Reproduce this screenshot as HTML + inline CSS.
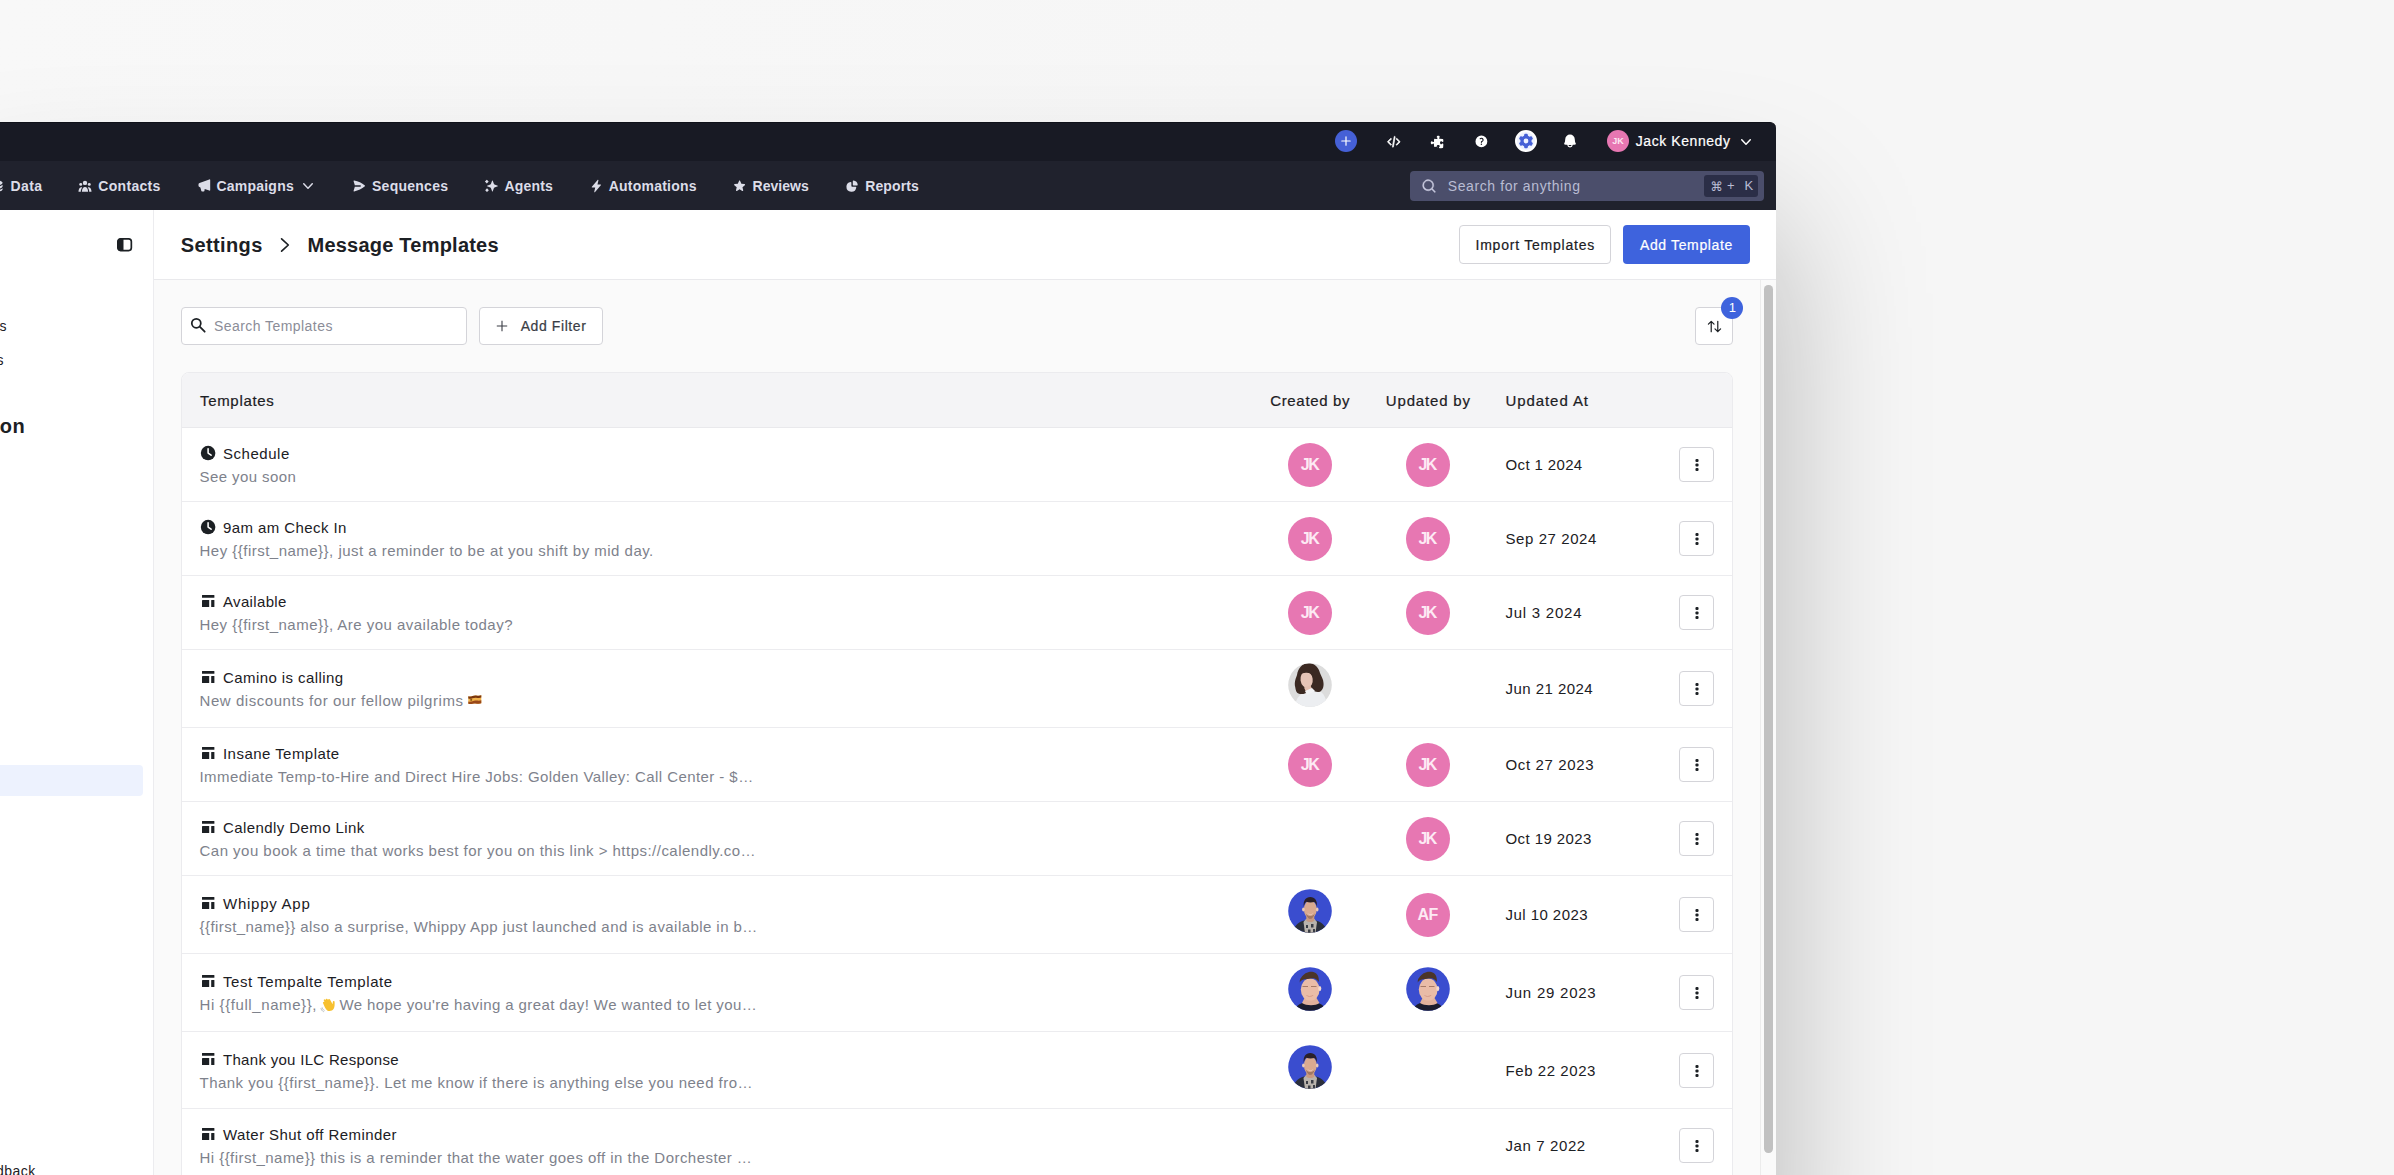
<!DOCTYPE html>
<html lang="en"><head><meta charset="utf-8"><title>Message Templates</title>
<style>
*{box-sizing:border-box;margin:0;padding:0}
html,body{width:2394px;height:1175px;overflow:hidden}
body{position:relative;font-family:"Liberation Sans",sans-serif;
 background:
  linear-gradient(100deg,#f8f8f8 0%,#f6f6f6 50%,#f6f6f6 100%);}
.t{position:absolute;white-space:pre;display:block}
.abs{position:absolute}
svg{position:absolute;display:block;overflow:visible}
.win{position:absolute;left:-40px;top:121.5px;width:1816px;height:1100px;border-top-right-radius:6px;background:#fff;
 box-shadow:0 100px 150px rgba(0,0,0,.27)}
.topbar{position:absolute;left:0;top:121.5px;width:1776px;height:39.5px;background:#181a24;border-top:1px solid #0f1119;border-top-right-radius:6px}
.navbar{position:absolute;left:0;top:160.5px;width:1776px;height:49px;background:#20222d}
.sidebar{position:absolute;left:0;top:209.5px;width:154px;height:970px;background:#fff;border-right:1px solid #ececef}
.header{position:absolute;left:154px;top:209.5px;width:1622px;height:70.5px;background:#fff;border-bottom:1px solid #e9e9ec}
.content{position:absolute;left:154px;top:280px;width:1622px;height:900px;background:#fafafa}
.sline{position:absolute;left:1760px;top:280px;width:1px;height:900px;background:#ececec}
.sthumb{position:absolute;left:1764.3px;top:284.5px;width:8.4px;height:868px;border-radius:4.2px;background:#c1c1c1}
.btn{position:absolute;border:1px solid #d4d4d9;border-radius:4px;background:#fff}
.table{position:absolute;left:181px;top:372px;width:1552px;height:830px;border:1px solid #ebebee;border-radius:8px;background:#fff;overflow:hidden}
.thead{position:absolute;left:0;top:0;width:100%;height:55px;background:#f4f4f6;border-bottom:1px solid #e9e9ec}
.rline{position:absolute;left:182px;width:1550px;height:1px;background:#ececef}
.av{position:absolute;width:44px;height:44px;border-radius:50%;background:#e777b2;overflow:hidden}

</style></head>
<body>
<div class="win"></div>
<div class="topbar"></div>
<div class="navbar"></div>
<div class="sidebar"></div>
<div class="header"></div>
<div class="content"></div>
<div class="sline"></div><div class="sthumb"></div>
<div class="abs" style="left:1335px;top:130.3px;width:22px;height:22px;border-radius:50%;background:#4560d6"></div>
<svg viewBox="0 0 20 20" width="16" height="16" style="left:1338.00px;top:133.30px;fill:#fff;"><path d="M10.75 4.75a.75.75 0 00-1.5 0v4.5h-4.5a.75.75 0 000 1.5h4.5v4.5a.75.75 0 001.5 0v-4.5h4.5a.75.75 0 000-1.5h-4.5v-4.5z"/></svg>
<svg viewBox="0 0 20 20" width="13.6" height="13.6" style="left:1386.50px;top:135.10px;fill:#fff;stroke:#fff;stroke-width:1;stroke-linejoin:round;"><path fill-rule="evenodd" d="M6.28 5.22a.75.75 0 010 1.06L2.56 10l3.72 3.72a.75.75 0 01-1.06 1.06L.97 10.53a.75.75 0 010-1.06l4.25-4.25a.75.75 0 011.06 0zm7.44 0a.75.75 0 011.06 0l4.25 4.25a.75.75 0 010 1.06l-4.25 4.25a.75.75 0 01-1.06-1.06L17.44 10l-3.72-3.72a.75.75 0 010-1.06zM11.377 2.011a.75.75 0 01.612.867l-2.5 14.5a.75.75 0 01-1.478-.255l2.5-14.5a.75.75 0 01.866-.612z" clip-rule="evenodd"/></svg>
<svg viewBox="0 0 20 20" width="15" height="15" style="left:1430.30px;top:134.60px;fill:#fff;"><path d="M12 4.467c0-.405.262-.75.559-1.027.276-.257.441-.584.441-.94 0-.828-.895-1.5-2-1.5s-2 .672-2 1.5c0 .362.171.694.456.953.29.265.544.6.544.994a.968.968 0 01-1.033.968 39.31 39.31 0 01-2.632-.291.75.75 0 00-.85.67 41.84 41.84 0 00-.198 2.777c-.013.48-.426.858-.906.858-.401 0-.739-.265-.999-.571C3.116 8.55 2.78 8.375 2.5 8.375c-.828 0-1.5.895-1.5 2s.672 2 1.5 2c.28 0 .616-.175.882-.483.26-.306.598-.571.999-.571.48 0 .893.378.906.858.03 1.076.11 2.14.24 3.19a.75.75 0 00.85.645c.92-.114 1.85-.196 2.79-.245A.968.968 0 0010 16.8c0-.394-.254-.73-.544-.994C9.171 15.546 9 15.215 9 14.853c0-.828.895-1.5 2-1.5s2 .672 2 1.5c0 .355-.165.683-.441.94-.297.277-.559.622-.559 1.027a.997.997 0 001.048.997c1.292-.086 2.57-.22 3.832-.402a.75.75 0 00.64-.682c.137-1.457.218-2.93.24-4.417a.968.968 0 00-.968-.983c-.394 0-.73.254-.994.544-.26.285-.591.456-.953.456-.828 0-1.5-.895-1.5-2s.672-2 1.5-2c.356 0 .683.165.94.441.277.297.622.559 1.027.559a.997.997 0 00.997-1.048 41.4 41.4 0 00-.176-2.245.75.75 0 00-.678-.67 39.3 39.3 0 00-3.907-.337A.997.997 0 0112 4.467z"/></svg>
<svg viewBox="0 0 20 20" width="14.8" height="14.8" style="left:1474.30px;top:133.90px;fill:#fff;"><path fill-rule="evenodd" d="M18 10a8 8 0 11-16 0 8 8 0 0116 0zM8.94 6.94a.75.75 0 11-1.061-1.061 3 3 0 112.871 5.026v.345a.75.75 0 01-1.5 0v-.5c0-.72.57-1.172 1.081-1.287A1.5 1.5 0 108.94 6.94zM10 15a1 1 0 100-2 1 1 0 000 2z" clip-rule="evenodd"/></svg>
<div class="abs" style="left:1515px;top:130.3px;width:22px;height:22px;border-radius:50%;background:#eef2ff;border:2px solid #fff"></div>
<svg viewBox="0 0 20 20" width="16" height="16" style="left:1518.00px;top:133.30px;fill:#4560d6;"><path fill-rule="evenodd" d="M7.84 1.804A1 1 0 018.82 1h2.36a1 1 0 01.98.804l.331 1.652a6.993 6.993 0 011.929 1.115l1.598-.54a1 1 0 011.186.447l1.18 2.044a1 1 0 01-.205 1.251l-1.267 1.113a7.047 7.047 0 010 2.228l1.267 1.113a1 1 0 01.206 1.25l-1.18 2.045a1 1 0 01-1.187.447l-1.598-.54a6.993 6.993 0 01-1.929 1.115l-.33 1.652a1 1 0 01-.98.804H8.82a1 1 0 01-.98-.804l-.331-1.652a6.993 6.993 0 01-1.929-1.115l-1.598.54a1 1 0 01-1.186-.447l-1.18-2.044a1 1 0 01.205-1.251l1.267-1.114a7.05 7.05 0 010-2.227L1.821 7.773a1 1 0 01-.206-1.25l1.18-2.045a1 1 0 011.187-.447l1.598.54A6.993 6.993 0 017.51 3.456l.33-1.652zM10 13a3 3 0 100-6 3 3 0 000 6z" clip-rule="evenodd"/></svg>
<svg viewBox="0 0 20 20" width="16" height="16" style="left:1561.80px;top:133.30px;fill:#fff;"><path fill-rule="evenodd" d="M10 2a6 6 0 00-6 6c0 1.887-.454 3.665-1.257 5.234a.75.75 0 00.515 1.076 32.91 32.91 0 003.256.508 3.5 3.5 0 006.972 0 32.903 32.903 0 003.256-.508.75.75 0 00.515-1.076A11.448 11.448 0 0116 8a6 6 0 00-6-6zM8.05 14.943a33.54 33.54 0 003.9 0 2 2 0 01-3.9 0z" clip-rule="evenodd"/></svg>
<div class="abs" style="left:1606.8px;top:130.10000000000002px;width:22.4px;height:22.4px;border-radius:50%;background:#e777b2"></div>
<span class="t" style="left:1612.13px;top:135.78px;font-size:9px;font-weight:700;color:#fde8f3;letter-spacing:0.219px;line-height:11px;">JK</span>
<span class="t" style="left:1635.70px;top:133.05px;font-size:14px;font-weight:400;-webkit-text-stroke:.2px;color:#fff;letter-spacing:0.577px;line-height:17px;">Jack Kennedy</span>
<svg viewBox="0 0 20 20" width="20" height="20" style="left:1735.60px;top:132.00px;fill:#fff;"><path fill-rule="evenodd" d="M5.23 7.21a.75.75 0 011.06.02L10 11.168l3.71-3.938a.75.75 0 111.08 1.04l-4.25 4.5a.75.75 0 01-1.08 0l-4.25-4.5a.75.75 0 01.02-1.06z" clip-rule="evenodd"/></svg>
<svg viewBox="0 0 20 20" width="14" height="14" style="left:-9.80px;top:178.80px;fill:#dcdde8;"><path d="M2 5.5C2 3.6 5.6 2 10 2s8 1.600 8 3.500S14.400 9 10 9 2 7.400 2 5.500zM2 8.200v2.300C2 12.400 5.600 14 10 14s8-1.600 8-3.500V8.200C16.500 9.900 13.400 10.800 10 10.800S3.500 9.900 2 8.200zM2 13.200v1.300C2 16.400 5.600 18 10 18s8-1.600 8-3.500v-1.300c-1.500 1.700-4.600 2.600-8 2.600s-6.500-.900-8-2.600z"/></svg>
<span class="t" style="left:10.40px;top:177.55px;font-size:14px;font-weight:700;color:#dcdde8;letter-spacing:0.447px;line-height:17px;">Data</span>
<svg viewBox="0 0 20 20" width="14" height="14" style="left:78.00px;top:178.80px;fill:#dcdde8;"><circle cx="10" cy="5.600" r="3.100"/><circle cx="3.900" cy="7.700" r="2.100"/><circle cx="16.100" cy="7.700" r="2.100"/><path d="M5.600 18.200c0-3.800 1.900-6.700 4.400-6.700s4.400 2.900 4.400 6.700z"/><path d="M.7 18.200c0-3.300 1.300-6 3.600-6.500.6-.1 1.200 0 1.700.3-1.300 1.500-2 3.700-2 6.200zM19.300 18.200c0-3.300-1.300-6-3.600-6.500-.6-.1-1.200 0-1.700.3 1.300 1.500 2 3.700 2 6.200z"/></svg>
<span class="t" style="left:98.20px;top:177.55px;font-size:14px;font-weight:700;color:#dcdde8;letter-spacing:0.328px;line-height:17px;">Contacts</span>
<svg viewBox="0 0 14 14" width="14" height="14" style="left:197.00px;top:178.80px;fill:#dcdde8;"><path d="M1.500 5.200Q1.500 4.200 2.500 3.900L12.300 .4Q13.200 .1 13.200 1.100V10.900Q13.200 11.900 12.300 11.600L7.700 9.950 7.450 11.800Q7.350 12.450 6.700 12.450H5.050Q4.400 12.450 4.250 11.800L3.400 8.450 2.500 8.100Q1.500 7.800 1.500 6.800Z"/></svg>
<span class="t" style="left:216.50px;top:177.55px;font-size:14px;font-weight:700;color:#dcdde8;letter-spacing:0.216px;line-height:17px;">Campaigns</span>
<svg viewBox="0 0 20 20" width="14" height="14" style="left:351.80px;top:178.80px;fill:#dcdde8;"><path d="M3.105 2.289a.75.75 0 00-.826.95l1.900 6.100a2 2 0 010 1.300l-1.900 6.100a.75.75 0 00.826.95 28.896 28.896 0 0015.293-7.154.75.75 0 000-1.115A28.897 28.897 0 003.105 2.289z"/><path d="M4.600 10h7.200" fill="none" stroke="#20222d" stroke-width="1.800" stroke-linecap="round"/></svg>
<span class="t" style="left:372.00px;top:177.55px;font-size:14px;font-weight:700;color:#dcdde8;letter-spacing:0.258px;line-height:17px;">Sequences</span>
<svg viewBox="0 0 20 20" width="14" height="14" style="left:484.30px;top:178.80px;fill:#dcdde8;"><path d="M12.500 2.400l1.700 4.600a1.400 1.400 0 00.830.830l4.600 1.700a.5.5 0 010 .94l-4.600 1.700a1.400 1.400 0 00-.830.830l-1.700 4.600a.5.5 0 01-.94 0l-1.700-4.600a1.400 1.400 0 00-.830-.830l-4.600-1.700a.5.5 0 010-.94l4.600-1.700a1.400 1.400 0 00.830-.830l1.700-4.600a.5.5 0 01.94 0z"/><path d="M4 .9L6.700 3.700 4 6.500 1.300 3.700zM4.300 13.200L6.900 15.900 4.300 18.600 1.700 15.900z"/></svg>
<span class="t" style="left:504.50px;top:177.55px;font-size:14px;font-weight:700;color:#dcdde8;letter-spacing:0.169px;line-height:17px;">Agents</span>
<svg viewBox="0 0 20 20" width="14" height="14" style="left:588.50px;top:178.80px;fill:#dcdde8;"><path d="M12.300 1.300c.5-.6 1.400-.1 1.200.6L12.100 7.800h4.200c.7 0 1 .8.600 1.300L8.700 18.700c-.5.6-1.400.1-1.200-.6l1.400-5.900H4.700c-.7 0-1-.8-.6-1.300z"/></svg>
<span class="t" style="left:608.70px;top:177.55px;font-size:14px;font-weight:700;color:#dcdde8;letter-spacing:0.224px;line-height:17px;">Automations</span>
<svg viewBox="0 0 20 20" width="13.2" height="13.2" style="left:733.40px;top:179.20px;fill:#dcdde8;"><path fill-rule="evenodd" d="M10.868 2.884c-.321-.772-1.415-.772-1.736 0l-1.83 4.401-4.753.381c-.833.067-1.171 1.107-.536 1.651l3.62 3.102-1.106 4.637c-.194.813.691 1.456 1.405 1.02L10 15.591l4.069 2.485c.713.436 1.598-.207 1.404-1.02l-1.106-4.637 3.62-3.102c.635-.544.297-1.584-.536-1.65l-4.752-.382-1.831-4.401z" clip-rule="evenodd"/></svg>
<span class="t" style="left:752.60px;top:177.55px;font-size:14px;font-weight:700;color:#dcdde8;letter-spacing:0.009px;line-height:17px;">Reviews</span>
<svg viewBox="0 0 20 20" width="14.2" height="14.2" style="left:845.40px;top:178.70px;fill:#dcdde8;"><path d="M12 9a1 1 0 01-1-1V3c0-.552.45-1.007.997-.93a7.004 7.004 0 015.933 5.933c.078.547-.378.997-.93.997h-5z"/><path d="M8.003 4.07C8.55 3.994 9 4.449 9 5v5a1 1 0 001 1h5c.552 0 1.008.45.93.997A7.001 7.001 0 012 11a7.002 7.002 0 016.003-6.93z"/></svg>
<span class="t" style="left:865.20px;top:177.55px;font-size:14px;font-weight:700;color:#dcdde8;letter-spacing:0.132px;line-height:17px;">Reports</span>
<svg viewBox="0 0 20 20" width="20" height="20" style="left:298.40px;top:176.30px;fill:#dcdde8;"><path fill-rule="evenodd" d="M5.23 7.21a.75.75 0 011.06.02L10 11.168l3.71-3.938a.75.75 0 111.08 1.04l-4.25 4.5a.75.75 0 01-1.08 0l-4.25-4.5a.75.75 0 01.02-1.06z" clip-rule="evenodd"/></svg>
<div class="abs" style="left:1410px;top:171px;width:354px;height:30px;border-radius:4px;background:#4b4e6b"></div>
<svg viewBox="0 0 20 20" width="16" height="16" style="left:1421.00px;top:178.30px;fill:#c9cbe0;stroke:#c9cbe0;stroke-width:.5;"><path fill-rule="evenodd" d="M9 3.5a5.5 5.5 0 100 11 5.5 5.5 0 000-11zM2 9a7 7 0 1112.452 4.391l3.328 3.329a.75.75 0 11-1.06 1.06l-3.329-3.328A7 7 0 012 9z" clip-rule="evenodd"/></svg>
<span class="t" style="left:1447.80px;top:178.05px;font-size:14px;font-weight:400;color:#b9bcd3;letter-spacing:0.600px;line-height:17px;">Search for anything</span>
<div class="abs" style="left:1704px;top:174.5px;width:54px;height:22px;border-radius:3px;background:#2b2e47"></div>
<span class="t" style="left:1710.60px;top:178.77px;font-size:12.5px;font-weight:400;color:#b9bcd3;letter-spacing:0.000px;line-height:15px;font-family:'DejaVu Sans',sans-serif;">⌘</span>
<span class="t" style="left:1727.00px;top:178.10px;font-size:13px;font-weight:400;color:#b9bcd3;letter-spacing:0.000px;line-height:16px;">+</span>
<span class="t" style="left:1744.60px;top:178.10px;font-size:13px;font-weight:400;color:#b9bcd3;letter-spacing:0.000px;line-height:16px;">K</span>
<svg viewBox="0 0 15.2 13.4" width="15.2" height="13.4" style="left:117px;top:238.3px"><rect x=".85" y=".85" width="13.500" height="11.700" rx="2.700" fill="none" stroke="#1c2024" stroke-width="1.700"/><path d="M3.500 .5h3v12.400h-3a3 3 0 01-3-3V3.500a3 3 0 013-3z" fill="#1c2024"/></svg>
<div class="abs" style="left:0;top:765px;width:143px;height:31px;border-radius:0 4px 4px 0;background:#edf2fe"></div>
<span class="t" style="left:-55.36px;top:317.65px;font-size:14px;font-weight:400;color:#1c2024;letter-spacing:0.386px;line-height:17px;">Channels</span>
<span class="t" style="left:-35.14px;top:351.65px;font-size:14px;font-weight:400;color:#1c2024;letter-spacing:0.520px;line-height:17px;">Users</span>
<span class="t" style="left:-89.51px;top:414.27px;font-size:20px;font-weight:700;color:#1c2024;letter-spacing:0.335px;line-height:24px;">Automation</span>
<span class="t" style="left:-29.56px;top:1162.65px;font-size:14px;font-weight:400;color:#1c2024;letter-spacing:0.482px;line-height:17px;">Feedback</span>
<span class="t" style="left:180.70px;top:233.07px;font-size:20px;font-weight:700;color:#1c2024;letter-spacing:0.385px;line-height:24px;">Settings</span>
<svg viewBox="0 0 10 16" width="10" height="16" style="left:280px;top:237px;fill:none;stroke:#1c2024;stroke-width:1.700;stroke-linecap:round;stroke-linejoin:round"><path d="M1.600 1.800L8.300 8 1.600 14.200"/></svg>
<span class="t" style="left:307.50px;top:233.07px;font-size:20px;font-weight:700;color:#1c2024;letter-spacing:0.225px;line-height:24px;">Message Templates</span>
<div class="btn" style="left:1459px;top:225.2px;width:152px;height:38.5px"></div>
<span class="t" style="left:1475.50px;top:236.65px;font-size:14px;font-weight:400;-webkit-text-stroke:.2px;color:#1c2024;letter-spacing:0.772px;line-height:17px;">Import Templates</span>
<div class="abs" style="left:1622.5px;top:225.2px;width:127px;height:38.5px;border-radius:4px;background:#3e63dd"></div>
<span class="t" style="left:1639.90px;top:236.65px;font-size:14px;font-weight:400;-webkit-text-stroke:.2px;color:#fff;letter-spacing:0.649px;line-height:17px;">Add Template</span>
<div class="btn" style="left:181px;top:307px;width:286px;height:38px"></div>
<svg viewBox="0 0 16 16" width="16" height="16" style="left:190px;top:317.3px;fill:none;stroke:#1c2024;stroke-width:1.750;stroke-linecap:round"><circle cx="6.300" cy="6.300" r="4.500"/><path d="M9.700 9.700L14.700 14.700"/></svg>
<span class="t" style="left:214.00px;top:318.45px;font-size:14px;font-weight:400;color:#8b8d98;letter-spacing:0.439px;line-height:17px;">Search Templates</span>
<div class="btn" style="left:479px;top:307px;width:123.5px;height:38px"></div>
<svg viewBox="0 0 12 12" width="12" height="12" style="left:496px;top:320.4px;stroke:#3a3d45;stroke-width:1.100;fill:none"><path d="M6 .800v10.400M.800 6h10.400"/></svg>
<span class="t" style="left:520.70px;top:318.45px;font-size:14px;font-weight:400;-webkit-text-stroke:.2px;color:#3a3d45;letter-spacing:0.586px;line-height:17px;">Add Filter</span>
<div class="btn" style="left:1695px;top:307px;width:38px;height:38px"></div>
<svg viewBox="0 0 16 16" width="15" height="15" style="left:1706.5px;top:318.6px;stroke:#1c2024;stroke-width:1.300;fill:none;stroke-linecap:round;stroke-linejoin:round"><path d="M4.500 13.500V2.500M1.500 5.500l3-3 3 3M11.500 2.500v11M8.500 10.500l3 3 3-3"/></svg>
<div class="abs" style="left:1721px;top:297px;width:22px;height:22px;border-radius:50%;background:#3e63dd"></div>
<span class="t" style="left:1728.65px;top:300.10px;font-size:13px;font-weight:400;color:#fff;letter-spacing:0.000px;line-height:16px;">1</span>
<div class="table"><div class="thead"></div></div>
<span class="t" style="left:200.00px;top:391.50px;font-size:15px;font-weight:400;-webkit-text-stroke:.2px;color:#1c2024;letter-spacing:0.678px;line-height:18px;">Templates</span>
<span class="t" style="left:1270.20px;top:391.50px;font-size:15px;font-weight:400;-webkit-text-stroke:.2px;color:#1c2024;letter-spacing:0.669px;line-height:18px;">Created by</span>
<span class="t" style="left:1385.80px;top:391.50px;font-size:15px;font-weight:400;-webkit-text-stroke:.2px;color:#1c2024;letter-spacing:0.830px;line-height:18px;">Updated by</span>
<span class="t" style="left:1505.50px;top:391.50px;font-size:15px;font-weight:400;-webkit-text-stroke:.2px;color:#1c2024;letter-spacing:0.918px;line-height:18px;">Updated At</span>
<div class="rline" style="top:501px"></div>
<svg viewBox="0 0 20 20" width="18.2" height="18.2" style="left:198.80px;top:444.30px;fill:#1c2024;"><circle cx="10" cy="10" r="8"/><path d="M10 5.200V10l3.300 2.300" fill="none" stroke="#fff" stroke-width="1.700" stroke-linecap="round" stroke-linejoin="round"/></svg>
<span class="t" style="left:223.00px;top:444.50px;font-size:15px;font-weight:400;color:#1c2024;letter-spacing:0.527px;line-height:18px;">Schedule</span>
<span class="t" style="left:199.50px;top:467.70px;font-size:15px;font-weight:400;color:#7e828c;letter-spacing:0.416px;line-height:18px;">See you soon</span>
<div class="av" style="left:1288px;top:443px"></div><span class="t" style="left:1300.70px;top:455.06px;font-size:16px;font-weight:700;color:#fdeaf4;letter-spacing:-1.453px;line-height:19px;">JK</span>
<div class="av" style="left:1405.7px;top:443px"></div><span class="t" style="left:1418.40px;top:455.06px;font-size:16px;font-weight:700;color:#fdeaf4;letter-spacing:-1.453px;line-height:19px;">JK</span>
<span class="t" style="left:1505.50px;top:456.20px;font-size:15px;font-weight:400;color:#1c2024;letter-spacing:0.368px;line-height:18px;">Oct 1 2024</span>
<div class="btn" style="left:1679px;top:447.1px;width:35px;height:35px"></div>
<svg viewBox="0 0 4 14" width="4" height="14" style="left:1694.5px;top:457.8px;fill:#1c2024"><rect x=".45" y=".9" width="3.100" height="3.100" rx="1.100"/><rect x=".45" y="5.450" width="3.100" height="3.100" rx="1.100"/><rect x=".45" y="10" width="3.100" height="3.100" rx="1.100"/></svg>
<div class="rline" style="top:575px"></div>
<svg viewBox="0 0 20 20" width="18.2" height="18.2" style="left:198.80px;top:518.30px;fill:#1c2024;"><circle cx="10" cy="10" r="8"/><path d="M10 5.200V10l3.300 2.300" fill="none" stroke="#fff" stroke-width="1.700" stroke-linecap="round" stroke-linejoin="round"/></svg>
<span class="t" style="left:223.00px;top:518.50px;font-size:15px;font-weight:400;color:#1c2024;letter-spacing:0.415px;line-height:18px;">9am am Check In</span>
<span class="t" style="left:199.50px;top:541.70px;font-size:15px;font-weight:400;color:#7e828c;letter-spacing:0.482px;line-height:18px;">Hey {{first_name}}, just a reminder to be at you shift by mid day.</span>
<div class="av" style="left:1288px;top:517px"></div><span class="t" style="left:1300.70px;top:529.06px;font-size:16px;font-weight:700;color:#fdeaf4;letter-spacing:-1.453px;line-height:19px;">JK</span>
<div class="av" style="left:1405.7px;top:517px"></div><span class="t" style="left:1418.40px;top:529.06px;font-size:16px;font-weight:700;color:#fdeaf4;letter-spacing:-1.453px;line-height:19px;">JK</span>
<span class="t" style="left:1505.50px;top:530.20px;font-size:15px;font-weight:400;color:#1c2024;letter-spacing:0.577px;line-height:18px;">Sep 27 2024</span>
<div class="btn" style="left:1679px;top:521.1px;width:35px;height:35px"></div>
<svg viewBox="0 0 4 14" width="4" height="14" style="left:1694.5px;top:531.8px;fill:#1c2024"><rect x=".45" y=".9" width="3.100" height="3.100" rx="1.100"/><rect x=".45" y="5.450" width="3.100" height="3.100" rx="1.100"/><rect x=".45" y="10" width="3.100" height="3.100" rx="1.100"/></svg>
<div class="rline" style="top:649px"></div>
<svg viewBox="0 0 12.4 12" width="12.4" height="12" style="left:201.9px;top:595px;fill:#1c2024"><rect x="0" y="0" width="12.400" height="2.800" rx=".3"/><rect x="0" y="5.100" width="7.200" height="6.900" rx=".3"/><rect x="9.200" y="5.100" width="3.200" height="6.900" rx=".3"/></svg>
<span class="t" style="left:223.00px;top:592.50px;font-size:15px;font-weight:400;color:#1c2024;letter-spacing:0.346px;line-height:18px;">Available</span>
<span class="t" style="left:199.50px;top:615.70px;font-size:15px;font-weight:400;color:#7e828c;letter-spacing:0.472px;line-height:18px;">Hey {{first_name}}, Are you available today?</span>
<div class="av" style="left:1288px;top:591px"></div><span class="t" style="left:1300.70px;top:603.06px;font-size:16px;font-weight:700;color:#fdeaf4;letter-spacing:-1.453px;line-height:19px;">JK</span>
<div class="av" style="left:1405.7px;top:591px"></div><span class="t" style="left:1418.40px;top:603.06px;font-size:16px;font-weight:700;color:#fdeaf4;letter-spacing:-1.453px;line-height:19px;">JK</span>
<span class="t" style="left:1505.50px;top:604.20px;font-size:15px;font-weight:400;color:#1c2024;letter-spacing:0.750px;line-height:18px;">Jul 3 2024</span>
<div class="btn" style="left:1679px;top:595.1px;width:35px;height:35px"></div>
<svg viewBox="0 0 4 14" width="4" height="14" style="left:1694.5px;top:605.8px;fill:#1c2024"><rect x=".45" y=".9" width="3.100" height="3.100" rx="1.100"/><rect x=".45" y="5.450" width="3.100" height="3.100" rx="1.100"/><rect x=".45" y="10" width="3.100" height="3.100" rx="1.100"/></svg>
<div class="rline" style="top:727px"></div>
<svg viewBox="0 0 12.4 12" width="12.4" height="12" style="left:201.9px;top:671px;fill:#1c2024"><rect x="0" y="0" width="12.400" height="2.800" rx=".3"/><rect x="0" y="5.100" width="7.200" height="6.900" rx=".3"/><rect x="9.200" y="5.100" width="3.200" height="6.900" rx=".3"/></svg>
<span class="t" style="left:223.00px;top:668.50px;font-size:15px;font-weight:400;color:#1c2024;letter-spacing:0.420px;line-height:18px;">Camino is calling</span>
<span class="t" style="left:199.50px;top:691.70px;font-size:15px;font-weight:400;color:#7e828c;letter-spacing:0.557px;line-height:18px;">New discounts for our fellow pilgrims</span>
<svg role="img" aria-label="avatar" viewBox="0 0 44 44" width="44" height="44" style="left:1288px;top:662.9px"><defs><clipPath id="cw"><circle cx="22" cy="22" r="21.800"/></clipPath></defs><g clip-path="url(#cw)"><rect width="44" height="44" fill="#dcdcdc"/><path d="M7 46c0-8 3-14 9-16l6-4 9 2c5 2 8 8 8 18z" fill="#eceef1"/><path d="M7.200 24c-1.200-5 .8-9 1.800-12C10 5 14.500.3 20.500.3 27.500.3 30.500 5 32 10c1 3 3.500 6 3.500 10 .5 4.500-1.500 8.500-4.500 9-3 .5-5.500-1-7-2.500L17 30.500c-3 1.200-7.500.7-8.700-2-.6-1.400-.9-3-1.100-4.500z" fill="#3b2922"/><ellipse cx="18.600" cy="16.600" rx="6.100" ry="8.300" transform="rotate(-8 18.600 16.600)" fill="#e6c4b6"/><path d="M11.500 11c2-3.500 7-5 11-2.500 2 1.200 3 3 3.500 5-2-2.500-5-4-8-3.800-2.500.2-4.500 1-6.500 1.300z" fill="#3b2922"/><path d="M16 24.500l6.500-2 2.500 5.500-6 3z" fill="#e3bfb0"/><path d="M17 28l7-3 3 3-8 4z" fill="#f2f3f5"/></g></svg>
<span class="t" style="left:1505.50px;top:680.20px;font-size:15px;font-weight:400;color:#1c2024;letter-spacing:0.463px;line-height:18px;">Jun 21 2024</span>
<div class="btn" style="left:1679px;top:671.1px;width:35px;height:35px"></div>
<svg viewBox="0 0 4 14" width="4" height="14" style="left:1694.5px;top:681.8px;fill:#1c2024"><rect x=".45" y=".9" width="3.100" height="3.100" rx="1.100"/><rect x=".45" y="5.450" width="3.100" height="3.100" rx="1.100"/><rect x=".45" y="10" width="3.100" height="3.100" rx="1.100"/></svg>
<div class="rline" style="top:801px"></div>
<svg viewBox="0 0 12.4 12" width="12.4" height="12" style="left:201.9px;top:747px;fill:#1c2024"><rect x="0" y="0" width="12.400" height="2.800" rx=".3"/><rect x="0" y="5.100" width="7.200" height="6.900" rx=".3"/><rect x="9.200" y="5.100" width="3.200" height="6.900" rx=".3"/></svg>
<span class="t" style="left:223.00px;top:744.50px;font-size:15px;font-weight:400;color:#1c2024;letter-spacing:0.456px;line-height:18px;">Insane Template</span>
<span class="t" style="left:199.50px;top:767.70px;font-size:15px;font-weight:400;color:#7e828c;letter-spacing:0.431px;line-height:18px;">Immediate Temp-to-Hire and Direct Hire Jobs: Golden Valley: Call Center - $…</span>
<div class="av" style="left:1288px;top:743px"></div><span class="t" style="left:1300.70px;top:755.06px;font-size:16px;font-weight:700;color:#fdeaf4;letter-spacing:-1.453px;line-height:19px;">JK</span>
<div class="av" style="left:1405.7px;top:743px"></div><span class="t" style="left:1418.40px;top:755.06px;font-size:16px;font-weight:700;color:#fdeaf4;letter-spacing:-1.453px;line-height:19px;">JK</span>
<span class="t" style="left:1505.50px;top:756.20px;font-size:15px;font-weight:400;color:#1c2024;letter-spacing:0.631px;line-height:18px;">Oct 27 2023</span>
<div class="btn" style="left:1679px;top:747.1px;width:35px;height:35px"></div>
<svg viewBox="0 0 4 14" width="4" height="14" style="left:1694.5px;top:757.8px;fill:#1c2024"><rect x=".45" y=".9" width="3.100" height="3.100" rx="1.100"/><rect x=".45" y="5.450" width="3.100" height="3.100" rx="1.100"/><rect x=".45" y="10" width="3.100" height="3.100" rx="1.100"/></svg>
<div class="rline" style="top:875px"></div>
<svg viewBox="0 0 12.4 12" width="12.4" height="12" style="left:201.9px;top:821px;fill:#1c2024"><rect x="0" y="0" width="12.400" height="2.800" rx=".3"/><rect x="0" y="5.100" width="7.200" height="6.900" rx=".3"/><rect x="9.200" y="5.100" width="3.200" height="6.900" rx=".3"/></svg>
<span class="t" style="left:223.00px;top:818.50px;font-size:15px;font-weight:400;color:#1c2024;letter-spacing:0.415px;line-height:18px;">Calendly Demo Link</span>
<span class="t" style="left:199.50px;top:841.70px;font-size:15px;font-weight:400;color:#7e828c;letter-spacing:0.479px;line-height:18px;">Can you book a time that works best for you on this link &gt; https://calendly.co…</span>
<div class="av" style="left:1405.7px;top:817px"></div><span class="t" style="left:1418.40px;top:829.06px;font-size:16px;font-weight:700;color:#fdeaf4;letter-spacing:-1.453px;line-height:19px;">JK</span>
<span class="t" style="left:1505.50px;top:830.20px;font-size:15px;font-weight:400;color:#1c2024;letter-spacing:0.408px;line-height:18px;">Oct 19 2023</span>
<div class="btn" style="left:1679px;top:821.1px;width:35px;height:35px"></div>
<svg viewBox="0 0 4 14" width="4" height="14" style="left:1694.5px;top:831.8px;fill:#1c2024"><rect x=".45" y=".9" width="3.100" height="3.100" rx="1.100"/><rect x=".45" y="5.450" width="3.100" height="3.100" rx="1.100"/><rect x=".45" y="10" width="3.100" height="3.100" rx="1.100"/></svg>
<div class="rline" style="top:953px"></div>
<svg viewBox="0 0 12.4 12" width="12.4" height="12" style="left:201.9px;top:897px;fill:#1c2024"><rect x="0" y="0" width="12.400" height="2.800" rx=".3"/><rect x="0" y="5.100" width="7.200" height="6.900" rx=".3"/><rect x="9.200" y="5.100" width="3.200" height="6.900" rx=".3"/></svg>
<span class="t" style="left:223.00px;top:894.50px;font-size:15px;font-weight:400;color:#1c2024;letter-spacing:0.743px;line-height:18px;">Whippy App</span>
<span class="t" style="left:199.50px;top:917.70px;font-size:15px;font-weight:400;color:#7e828c;letter-spacing:0.438px;line-height:18px;">{{first_name}} also a surprise, Whippy App just launched and is available in b…</span>
<svg role="img" aria-label="avatar" viewBox="0 0 44 44" width="44" height="44" style="left:1288px;top:888.9px"><defs><clipPath id="cm910"><circle cx="22" cy="22" r="21.800"/></clipPath></defs><g clip-path="url(#cm910)"><rect width="44" height="44" fill="#3a4dcf"/><path d="M5 46c0-8 4-12.500 11-14.500h12c7 2 11 6.500 11 14.500z" fill="#2b2f3a"/><path d="M15.500 33l2.500-3h8.500l2.500 3-1.500 11h-10.500z" fill="#b9b3ac"/><path d="M18 36h2v3h-2zM23 35h2.500v3.500H23zM20 40.500h2.500V44H20zM25 40h2v3h-2z" fill="#3a3d45"/><path d="M18.300 25h8v6.500c-1.500 2-6.500 2-8 0z" fill="#c89a80"/><ellipse cx="22.300" cy="20.300" rx="6.400" ry="9" fill="#d9aa90"/><ellipse cx="15.400" cy="20.600" rx="1.300" ry="2" fill="#e9c9b8"/><ellipse cx="29.200" cy="20.600" rx="1.300" ry="2" fill="#e9c9b8"/><path d="M15.800 17.500c-.8-6 2-9.600 6.500-9.600s7.300 3.600 6.500 9.600c-.6-2.500-1.500-4-2.500-4.500-2.500.7-6 .6-8-.2-1.200.8-2 2.400-2.500 4.700z" fill="#2a2028"/><path d="M17.500 23.500c1 4.500 3 6.300 4.800 6.300s3.800-1.800 4.800-6.300c-.5 2.200-2.500 3.500-4.800 3.500s-4.300-1.300-4.800-3.500z" fill="#7a5646" opacity=".6"/><path d="M19.500 24.200c1.500 1.500 4 1.500 5.500 0-.8 1.700-4.500 1.800-5.500 0z" fill="#f4ece8"/></g></svg>
<div class="av" style="left:1405.7px;top:893px"></div><span class="t" style="left:1417.60px;top:905.06px;font-size:16px;font-weight:700;color:#fdeaf4;letter-spacing:-0.728px;line-height:19px;">AF</span>
<span class="t" style="left:1505.50px;top:906.20px;font-size:15px;font-weight:400;color:#1c2024;letter-spacing:0.452px;line-height:18px;">Jul 10 2023</span>
<div class="btn" style="left:1679px;top:897.1px;width:35px;height:35px"></div>
<svg viewBox="0 0 4 14" width="4" height="14" style="left:1694.5px;top:907.8px;fill:#1c2024"><rect x=".45" y=".9" width="3.100" height="3.100" rx="1.100"/><rect x=".45" y="5.450" width="3.100" height="3.100" rx="1.100"/><rect x=".45" y="10" width="3.100" height="3.100" rx="1.100"/></svg>
<div class="rline" style="top:1031px"></div>
<svg viewBox="0 0 12.4 12" width="12.4" height="12" style="left:201.9px;top:975px;fill:#1c2024"><rect x="0" y="0" width="12.400" height="2.800" rx=".3"/><rect x="0" y="5.100" width="7.200" height="6.900" rx=".3"/><rect x="9.200" y="5.100" width="3.200" height="6.900" rx=".3"/></svg>
<span class="t" style="left:223.00px;top:972.50px;font-size:15px;font-weight:400;color:#1c2024;letter-spacing:0.578px;line-height:18px;">Test Tempalte Template</span>
<svg role="img" aria-label="avatar" viewBox="0 0 44 44" width="44" height="44" style="left:1288px;top:966.9px"><defs><clipPath id="cn1310"><circle cx="22" cy="22" r="21.800"/></clipPath></defs><g clip-path="url(#cn1310)"><rect width="44" height="44" fill="#3a4dcf"/><path d="M6 47c0-6 4-10 10-11.500h12.500c6 1.500 10 5.500 10 11.500z" fill="#1b1d2e"/><path d="M16.500 31h12l3 5c-4 3-13 3-17.500 0z" fill="#e2b29c"/><ellipse cx="22.200" cy="22.600" rx="9.400" ry="11" fill="#e9bca7"/><ellipse cx="31.800" cy="21.500" rx="1.500" ry="2.500" fill="#f3d9cd"/><path d="M11.800 15.500c-.3-2.500.5-4 1.500-5 2.500-4 7.500-6.600 12-5.500 3.500.8 5.500 4 5.500 7.500v2.500c-1.500-2-3-3.200-5-3.700-4.500.5-9 .7-11.500 1.700-1 .5-2 1.500-2.500 2.500z" fill="#4b3529"/><path d="M14.500 19.500h5.500M23 19.500h5.500" stroke="#8a5e4c" stroke-width="1" opacity=".7"/><path d="M18 28c2 1.300 5 1.300 7.500 0-1 2-6 2.300-7.500 0z" fill="#c98a7a"/></g></svg>
<svg role="img" aria-label="avatar" viewBox="0 0 44 44" width="44" height="44" style="left:1405.7px;top:966.9px"><defs><clipPath id="cn1427"><circle cx="22" cy="22" r="21.800"/></clipPath></defs><g clip-path="url(#cn1427)"><rect width="44" height="44" fill="#3a4dcf"/><path d="M6 47c0-6 4-10 10-11.500h12.500c6 1.500 10 5.500 10 11.500z" fill="#1b1d2e"/><path d="M16.500 31h12l3 5c-4 3-13 3-17.500 0z" fill="#e2b29c"/><ellipse cx="22.200" cy="22.600" rx="9.400" ry="11" fill="#e9bca7"/><ellipse cx="31.800" cy="21.500" rx="1.500" ry="2.500" fill="#f3d9cd"/><path d="M11.800 15.500c-.3-2.500.5-4 1.500-5 2.500-4 7.500-6.600 12-5.500 3.500.8 5.500 4 5.500 7.500v2.500c-1.500-2-3-3.200-5-3.700-4.500.5-9 .7-11.500 1.700-1 .5-2 1.500-2.500 2.500z" fill="#4b3529"/><path d="M14.500 19.500h5.500M23 19.500h5.500" stroke="#8a5e4c" stroke-width="1" opacity=".7"/><path d="M18 28c2 1.300 5 1.300 7.500 0-1 2-6 2.300-7.500 0z" fill="#c98a7a"/></g></svg>
<span class="t" style="left:1505.50px;top:984.20px;font-size:15px;font-weight:400;color:#1c2024;letter-spacing:0.764px;line-height:18px;">Jun 29 2023</span>
<div class="btn" style="left:1679px;top:975.1px;width:35px;height:35px"></div>
<svg viewBox="0 0 4 14" width="4" height="14" style="left:1694.5px;top:985.8px;fill:#1c2024"><rect x=".45" y=".9" width="3.100" height="3.100" rx="1.100"/><rect x=".45" y="5.450" width="3.100" height="3.100" rx="1.100"/><rect x=".45" y="10" width="3.100" height="3.100" rx="1.100"/></svg>
<div class="rline" style="top:1108px"></div>
<svg viewBox="0 0 12.4 12" width="12.4" height="12" style="left:201.9px;top:1053px;fill:#1c2024"><rect x="0" y="0" width="12.400" height="2.800" rx=".3"/><rect x="0" y="5.100" width="7.200" height="6.900" rx=".3"/><rect x="9.200" y="5.100" width="3.200" height="6.900" rx=".3"/></svg>
<span class="t" style="left:223.00px;top:1050.50px;font-size:15px;font-weight:400;color:#1c2024;letter-spacing:0.301px;line-height:18px;">Thank you ILC Response</span>
<span class="t" style="left:199.50px;top:1073.70px;font-size:15px;font-weight:400;color:#7e828c;letter-spacing:0.463px;line-height:18px;">Thank you {{first_name}}. Let me know if there is anything else you need fro…</span>
<svg role="img" aria-label="avatar" viewBox="0 0 44 44" width="44" height="44" style="left:1288px;top:1044.9px"><defs><clipPath id="cm1066"><circle cx="22" cy="22" r="21.800"/></clipPath></defs><g clip-path="url(#cm1066)"><rect width="44" height="44" fill="#3a4dcf"/><path d="M5 46c0-8 4-12.500 11-14.500h12c7 2 11 6.500 11 14.500z" fill="#2b2f3a"/><path d="M15.500 33l2.500-3h8.500l2.500 3-1.500 11h-10.500z" fill="#b9b3ac"/><path d="M18 36h2v3h-2zM23 35h2.500v3.500H23zM20 40.500h2.500V44H20zM25 40h2v3h-2z" fill="#3a3d45"/><path d="M18.300 25h8v6.500c-1.500 2-6.500 2-8 0z" fill="#c89a80"/><ellipse cx="22.300" cy="20.300" rx="6.400" ry="9" fill="#d9aa90"/><ellipse cx="15.400" cy="20.600" rx="1.300" ry="2" fill="#e9c9b8"/><ellipse cx="29.200" cy="20.600" rx="1.300" ry="2" fill="#e9c9b8"/><path d="M15.800 17.500c-.8-6 2-9.600 6.500-9.600s7.300 3.600 6.500 9.600c-.6-2.500-1.500-4-2.500-4.500-2.500.7-6 .6-8-.2-1.200.8-2 2.400-2.500 4.700z" fill="#2a2028"/><path d="M17.500 23.500c1 4.500 3 6.300 4.800 6.300s3.800-1.800 4.800-6.300c-.5 2.200-2.500 3.500-4.800 3.500s-4.300-1.300-4.800-3.500z" fill="#7a5646" opacity=".6"/><path d="M19.500 24.200c1.500 1.500 4 1.500 5.500 0-.8 1.700-4.500 1.800-5.500 0z" fill="#f4ece8"/></g></svg>
<span class="t" style="left:1505.50px;top:1062.20px;font-size:15px;font-weight:400;color:#1c2024;letter-spacing:0.570px;line-height:18px;">Feb 22 2023</span>
<div class="btn" style="left:1679px;top:1053.1px;width:35px;height:35px"></div>
<svg viewBox="0 0 4 14" width="4" height="14" style="left:1694.5px;top:1063.8px;fill:#1c2024"><rect x=".45" y=".9" width="3.100" height="3.100" rx="1.100"/><rect x=".45" y="5.450" width="3.100" height="3.100" rx="1.100"/><rect x=".45" y="10" width="3.100" height="3.100" rx="1.100"/></svg>
<div class="rline" style="top:1182px"></div>
<svg viewBox="0 0 12.4 12" width="12.4" height="12" style="left:201.9px;top:1128px;fill:#1c2024"><rect x="0" y="0" width="12.400" height="2.800" rx=".3"/><rect x="0" y="5.100" width="7.200" height="6.900" rx=".3"/><rect x="9.200" y="5.100" width="3.200" height="6.900" rx=".3"/></svg>
<span class="t" style="left:223.00px;top:1125.50px;font-size:15px;font-weight:400;color:#1c2024;letter-spacing:0.418px;line-height:18px;">Water Shut off Reminder</span>
<span class="t" style="left:199.50px;top:1148.70px;font-size:15px;font-weight:400;color:#7e828c;letter-spacing:0.452px;line-height:18px;">Hi {{first_name}} this is a reminder that the water goes off in the Dorchester …</span>
<span class="t" style="left:1505.50px;top:1137.20px;font-size:15px;font-weight:400;color:#1c2024;letter-spacing:0.606px;line-height:18px;">Jan 7 2022</span>
<div class="btn" style="left:1679px;top:1128.1px;width:35px;height:35px"></div>
<svg viewBox="0 0 4 14" width="4" height="14" style="left:1694.5px;top:1138.8px;fill:#1c2024"><rect x=".45" y=".9" width="3.100" height="3.100" rx="1.100"/><rect x=".45" y="5.450" width="3.100" height="3.100" rx="1.100"/><rect x=".45" y="10" width="3.100" height="3.100" rx="1.100"/></svg>
<svg role="img" aria-label="flag: Spain" viewBox="0 0 13.6 9.4" width="13.6" height="9.4" style="left:467.8px;top:694.9px"><path d="M.3 1.300C3 2.300 5 .2 8 .5c2 .2 3.500.5 5.300-.2V8.300c-2 .9-4 .2-6 .2C5 8.500 3 9.600.3 8.800z" fill="#f1b24a"/><path d="M.3 1.300C3 2.300 5 .2 8 .5c2 .2 3.500.5 5.300-.2v2.300C11.500 3.200 10 2.900 8 2.700 5 2.500 3 4.400.3 3.500z" fill="#7a360f"/><path d="M.3 6.600c2.700.9 4.700-.9 7-1 2-.1 4 .6 6-.3v3c-2 .9-4 .2-6 .2C5 8.500 3 9.600.3 8.800z" fill="#99481a"/><rect x="2.300" y="4" width="1.800" height="1.800" fill="#8a5a14"/></svg>
<span class="t" style="left:199.50px;top:995.70px;font-size:15px;font-weight:400;color:#7e828c;letter-spacing:0.585px;line-height:18px;">Hi {{full_name}},</span>
<svg role="img" aria-label="waving hand" viewBox="0 0 16 16" width="16" height="16" style="left:319.8px;top:996.4000000000001px"><path d="M3.200 7.500c-.8-1.200.6-2.300 1.500-1.300L3.900 4.800c-.7-1.200.9-2.200 1.700-1l.3.400c-.5-1.200 1.100-2 1.800-.8l.5.800c-.3-1.100 1.200-1.700 1.800-.6l2.600 4.600.2-2.300c.1-1.200 1.800-1.100 1.800.1.100 2.400.2 5-.9 6.800-1.300 2.100-4.300 2.900-6.500 1.600C5.300 13.300 4.200 9.400 3.200 7.500z" fill="#f7c02f"/><path d="M2.200 11.800c.3 1.200 1 2.100 2 2.700M1 12.500c.3 1.400 1.200 2.500 2.400 3.100" stroke="#9aa0a8" stroke-width=".7" fill="none" stroke-linecap="round"/></svg>
<span class="t" style="left:339.50px;top:995.70px;font-size:15px;font-weight:400;color:#7e828c;letter-spacing:0.403px;line-height:18px;">We hope you&#x27;re having a great day! We wanted to let you…</span>
</body></html>
